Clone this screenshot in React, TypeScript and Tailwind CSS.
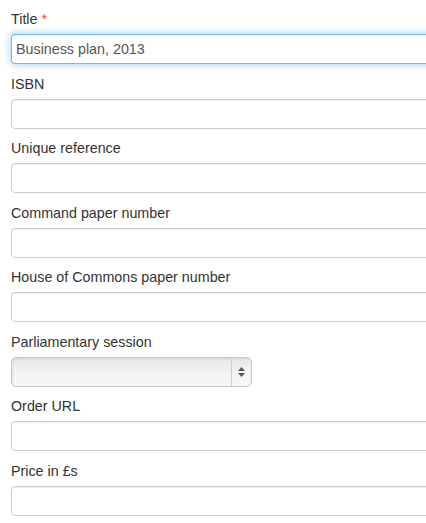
import React from "react";

const inputBase =
  "block h-[30px] w-[520px] rounded-[4px] border bg-white px-[4px] text-[14.3px] text-[#555] outline-none";

function Field({ label, required, value, focused }: { label: string; required?: boolean; value?: string; focused?: boolean }) {
  return (
    <div className="mb-[9.5px]">
      <label className="mb-[5px] block h-[20px] text-[14.3px] leading-[20px] text-[#333]">
        {label}
        {required && <span className="ml-[4px] text-[#e4572e]">*</span>}
      </label>
      <input
        readOnly
        value={value ?? ""}
        className={
          inputBase +
          (focused
            ? " border-[rgba(82,168,236,0.8)] shadow-[inset_0_1px_1px_rgba(0,0,0,0.075),0_0_8px_rgba(82,168,236,0.6)]"
            : " border-[#ccc] shadow-[inset_0_1px_1px_rgba(0,0,0,0.075)]")
        }
      />
    </div>
  );
}

export default function App() {
  return (
    <div
      className="h-[523px] w-[426px] overflow-hidden bg-white pl-[11px] pt-[9px]"
      style={{ fontFamily: '"Liberation Sans", Arial, sans-serif' }}
    >
      <Field label="Title" required value="Business plan, 2013" focused />
      <Field label="ISBN" />
      <Field label="Unique reference" />
      <Field label="Command paper number" />
      <Field label="House of Commons paper number" />
      <div className="mb-[9.5px]">
        <label className="mb-[5px] block h-[20px] text-[14.3px] leading-[20px] text-[#333]">
          Parliamentary session
        </label>
        <div className="flex h-[30px] w-[241px] overflow-hidden rounded-[5px] border border-[#c8c8c8] bg-gradient-to-b from-[#e6e6e6] via-[#f3f3f3] to-[#f7f7f7] shadow-[inset_1px_1px_2px_rgba(0,0,0,0.08)]">
          <div className="flex-1" />
          <div className="flex w-[20px] flex-col items-center justify-center gap-[2px] border-l border-[#cfcfcf]">
            <svg width="7" height="4" viewBox="0 0 7 4">
              <path d="M3.5 0L7 4H0z" fill="#555" />
            </svg>
            <svg width="7" height="4" viewBox="0 0 7 4">
              <path d="M0 0H7L3.5 4z" fill="#555" />
            </svg>
          </div>
        </div>
      </div>
      <Field label="Order URL" />
      <Field label="Price in £s" />
    </div>
  );
}
